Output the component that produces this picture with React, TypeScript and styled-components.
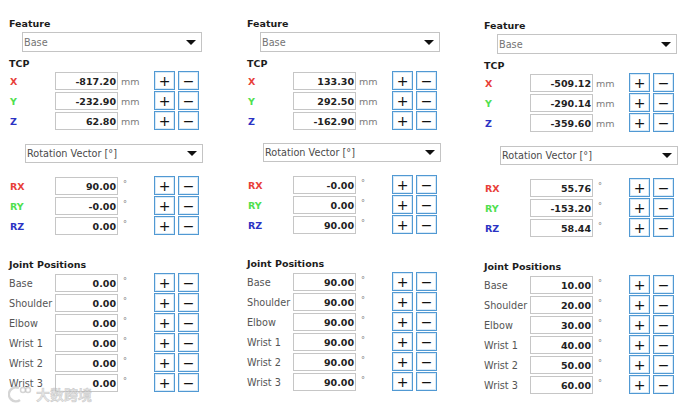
import React from "react";
import styled, { createGlobalStyle } from "styled-components";

const Global = createGlobalStyle`
  html, body { margin: 0; padding: 0; background: #ffffff; }
  body { font-family: "DejaVu Sans", "Noto Sans CJK SC", sans-serif; }
`;

const Page = styled.div`
  position: relative;
  width: 685px;
  height: 407px;
  box-sizing: border-box;
  padding-left: 9px;
  display: grid;
  grid-template-columns: 238px 237px 195px;
  align-items: start;
  overflow: hidden;
`;

const Panel = styled.div<{ $dy: number }>`
  display: flex;
  flex-direction: column;
  width: 195px;
  padding-top: ${(p) => 18 + p.$dy}px;
`;

const Heading = styled.div<{ $mt?: number }>`
  font-weight: bold;
  font-size: 9.5px;
  line-height: 12px;
  height: 12px;
  color: #1c1c1c;
  margin-top: ${(p) => p.$mt ?? 0}px;
  white-space: nowrap;
`;

const Select = styled.div<{ $ml: number; $w: number; $h: number; $mt: number; $dark?: boolean }>`
  display: flex;
  align-items: center;
  justify-content: space-between;
  box-sizing: border-box;
  margin-left: ${(p) => p.$ml}px;
  margin-top: ${(p) => p.$mt}px;
  width: ${(p) => p.$w}px;
  height: ${(p) => p.$h}px;
  border: 1px solid #c4c4c4;
  background: #ffffff;
  padding: 0 5px 0 1px;
  font-size: 9.7px;
  color: ${(p) => (p.$dark ? "#4a4a4a" : "#747474")};
  white-space: nowrap;
`;

const Caret = styled.span`
  width: 0;
  height: 0;
  border-left: 5px solid transparent;
  border-right: 5px solid transparent;
  border-top: 5px solid #111111;
`;

const Rows = styled.div<{ $mt: number }>`
  display: flex;
  flex-direction: column;
  gap: 2px;
  margin-top: ${(p) => p.$mt}px;
`;

const Row = styled.div`
  display: grid;
  grid-template-columns: 46px 63px 36px auto;
  align-items: center;
  height: 18px;
`;

const AxisLabel = styled.span<{ $color: string }>`
  font-weight: bold;
  font-size: 9.5px;
  color: ${(p) => p.$color};
  padding-left: 1px;
`;

const JointLabel = styled.span`
  font-size: 9.7px;
  color: #555555;
  white-space: nowrap;
`;

const ValueBox = styled.div`
  box-sizing: border-box;
  height: 18px;
  border: 1px solid #c6c6c6;
  background: #ffffff;
  display: flex;
  align-items: center;
  justify-content: flex-end;
  padding-right: 1px;
  font-weight: bold;
  font-size: 9.5px;
  color: #222222;
`;

const Unit = styled.span<{ $deg?: boolean }>`
  font-size: ${(p) => (p.$deg ? 8 : 9.5)}px;
  color: #7c7c7c;
  padding-left: ${(p) => (p.$deg ? 5 : 3)}px;
  align-self: ${(p) => (p.$deg ? "start" : "center")};
  margin-top: ${(p) => (p.$deg ? 3 : 0)}px;
`;

const Buttons = styled.div`
  display: flex;
  gap: 3px;
`;

const StepButton = styled.div`
  box-sizing: border-box;
  width: 21px;
  height: 19px;
  margin-top: -1px;
  border: 1px solid #5199d3;
  box-shadow: inset 0 0 0 1px #d9eaf7;
  background: #ffffff;
  display: flex;
  align-items: center;
  justify-content: center;
  font-size: 14px;
  line-height: 1;
  color: #111111;
`;

const Watermark = styled.div`
  position: absolute;
  left: 8px;
  top: 384px;
  display: flex;
  align-items: center;
  gap: 4px;
  font-family: "Noto Sans CJK SC", sans-serif;
  font-weight: bold;
  font-size: 14px;
  color: rgba(215, 215, 215, 0.7);
  -webkit-text-stroke: 0.5px rgba(170, 170, 170, 0.55);
  pointer-events: none;
`;

type AxisRow = { label: string; color: string; value: string };

const RED = "#e8403a";
const GREEN = "#4fe04f";
const BLUE = "#2b33c4";

type PanelData = {
  dy: number;
  shift: number;
  tcp: [string, string, string];
  rot: [string, string, string];
  joints: string[];
};

const jointNames = ["Base", "Shoulder", "Elbow", "Wrist 1", "Wrist 2", "Wrist 3"];

const Steppers = () => (
  <Buttons>
    <StepButton>+</StepButton>
    <StepButton>−</StepButton>
  </Buttons>
);

const RobotPanel: React.FC<{ data: PanelData }> = ({ data }) => {
  const tcpRows: AxisRow[] = [
    { label: "X", color: RED, value: data.tcp[0] },
    { label: "Y", color: GREEN, value: data.tcp[1] },
    { label: "Z", color: BLUE, value: data.tcp[2] },
  ];
  const rotRows: AxisRow[] = [
    { label: "RX", color: RED, value: data.rot[0] },
    { label: "RY", color: GREEN, value: data.rot[1] },
    { label: "RZ", color: BLUE, value: data.rot[2] },
  ];
  return (
    <Panel $dy={data.dy}>
      <Heading>Feature</Heading>
      <Select $ml={13} $w={180} $h={20} $mt={2}>
        <span>Base</span>
        <Caret />
      </Select>
      <Heading $mt={6}>TCP</Heading>
      <Rows $mt={2}>
        {tcpRows.map((r) => (
          <Row key={r.label}>
            <AxisLabel $color={r.color}>{r.label}</AxisLabel>
            <ValueBox>{r.value}</ValueBox>
            <Unit>mm</Unit>
            <Steppers />
          </Row>
        ))}
      </Rows>
      <Select $ml={16} $w={178} $h={19} $mt={14 + data.shift} $dark>
        <span>Rotation Vector [°]</span>
        <Caret />
      </Select>
      <Rows $mt={14}>
        {rotRows.map((r) => (
          <Row key={r.label}>
            <AxisLabel $color={r.color}>{r.label}</AxisLabel>
            <ValueBox>{r.value}</ValueBox>
            <Unit $deg>°</Unit>
            <Steppers />
          </Row>
        ))}
      </Rows>
      <Heading $mt={24}>Joint Positions</Heading>
      <Rows $mt={3}>
        {jointNames.map((n, i) => (
          <Row key={n}>
            <JointLabel>{n}</JointLabel>
            <ValueBox>{data.joints[i]}</ValueBox>
            <Unit $deg>°</Unit>
            <Steppers />
          </Row>
        ))}
      </Rows>
    </Panel>
  );
};

const panels: PanelData[] = [
  {
    dy: 0,
    shift: 0,
    tcp: ["-817.20", "-232.90", "62.80"],
    rot: ["90.00", "-0.00", "0.00"],
    joints: ["0.00", "0.00", "0.00", "0.00", "0.00", "0.00"],
  },
  {
    dy: 0,
    shift: -1,
    tcp: ["133.30", "292.50", "-162.90"],
    rot: ["-0.00", "0.00", "90.00"],
    joints: ["90.00", "90.00", "90.00", "90.00", "90.00", "90.00"],
  },
  {
    dy: 2,
    shift: 0,
    tcp: ["-509.12", "-290.14", "-359.60"],
    rot: ["55.76", "-153.20", "58.44"],
    joints: ["10.00", "20.00", "30.00", "40.00", "50.00", "60.00"],
  },
];

export default function App() {
  return (
    <>
      <Global />
      <Page>
        {panels.map((p, i) => (
          <RobotPanel key={i} data={p} />
        ))}
        <Watermark>
          <svg width="24" height="18" viewBox="0 0 24 18">
            <path
              d="M11 3 A7 7 0 1 0 12 15"
              fill="none"
              stroke="rgba(195,195,195,0.7)"
              strokeWidth="2.5"
            />
            <circle cx="15" cy="5" r="2.5" fill="none" stroke="rgba(195,195,195,0.7)" strokeWidth="1.5" />
            <circle cx="20" cy="5" r="2.5" fill="none" stroke="rgba(195,195,195,0.7)" strokeWidth="1.5" />
          </svg>
          <span>大数跨境</span>
        </Watermark>
      </Page>
    </>
  );
}
